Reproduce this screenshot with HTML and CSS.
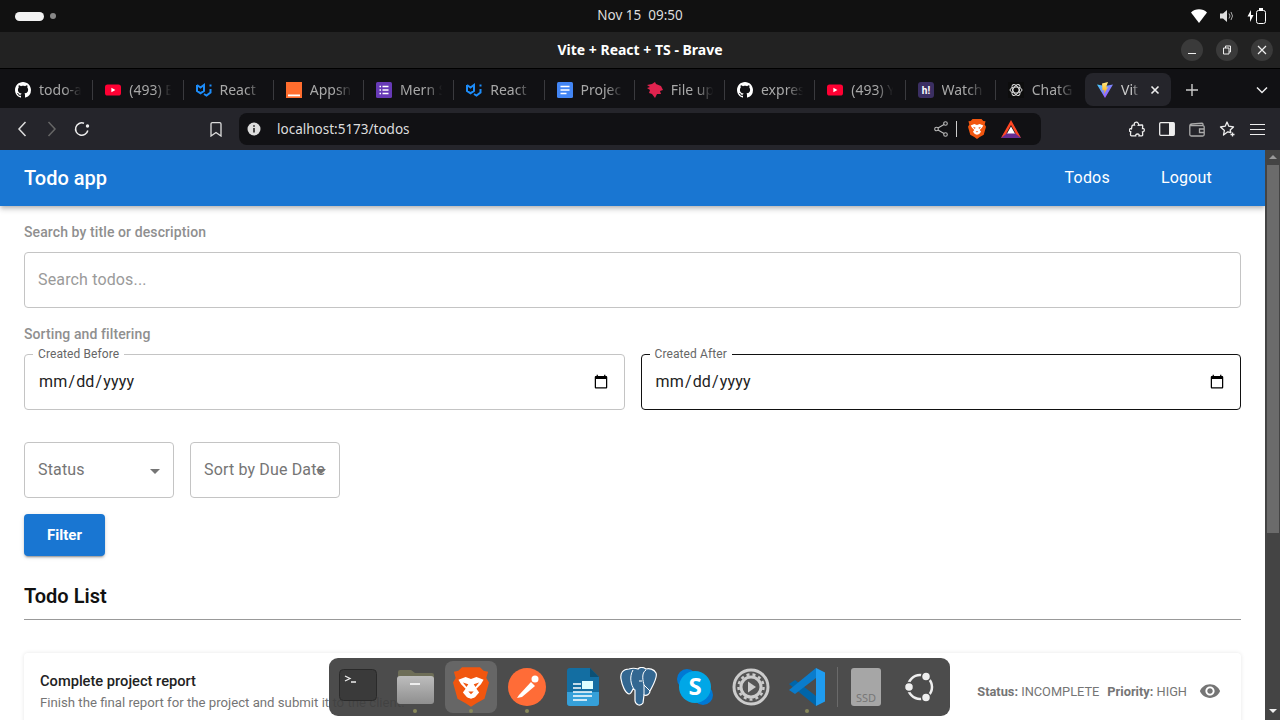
FILE: index.html
```html
<!DOCTYPE html>
<html lang="en">
  <head>
    <meta charset="UTF-8" />
    <title>Vite + React + TS - Brave</title>
    <link rel="stylesheet" href="styles.css">
  </head>
  <body>
    <svg class="defs" width="0" height="0">
      <symbol id="i-github" viewBox="0 0 16 16"><path fill="#fff" d="M8 0C3.58 0 0 3.58 0 8c0 3.54 2.29 6.53 5.47 7.59.4.07.55-.17.55-.38 0-.19-.01-.82-.01-1.49-2.01.37-2.53-.49-2.69-.94-.09-.23-.48-.94-.82-1.13-.28-.15-.68-.52-.01-.53.63-.01 1.08.58 1.23.82.72 1.21 1.87.87 2.33.66.07-.52.28-.87.51-1.07-1.78-.2-3.64-.89-3.64-3.95 0-.87.31-1.59.82-2.15-.08-.2-.36-1.02.08-2.12 0 0 .67-.21 2.2.82.64-.18 1.32-.27 2-.27.68 0 1.36.09 2 .27 1.53-1.04 2.2-.82 2.2-.82.44 1.1.16 1.92.08 2.12.51.56.82 1.27.82 2.15 0 3.07-1.87 3.75-3.65 3.95.29.25.54.73.54 1.48 0 1.07-.01 1.93-.01 2.2 0 .21.15.46.55.38A8.013 8.013 0 0016 8c0-4.42-3.58-8-8-8z"/></symbol>
      <symbol id="i-youtube" viewBox="0 0 16 16"><rect y="2.500" width="16" height="11" rx="2.600" fill="#ff0033"/><path fill="#fff" d="M6.400 5.700 10.400 8l-4 2.300z"/></symbol>
      <symbol id="i-mui" viewBox="0 0 16 16"><path fill="none" stroke="#1d8cf8" stroke-width="2" d="M1 3v6l3.500 2.200L8 9V3L4.500 5.500 1 3M14.500 2.500v2M14.500 7v3.500l-4 3-2.500-1.500"/></symbol>
      <symbol id="i-brave" viewBox="0 0 40 44">
        <path fill="#f1560f" d="M20 0H10L6 4 1 5l2 7-3 5 5 18 9 5 6 4 6-4 9-5 5-18-3-5 2-7-5-1-4-4z"/>
        <path fill="#fff" d="M6 14l8-3 6 2 6-2 8 3-3 5-5 5 3 4-5 6-4 2-4-2-5-6 3-4-5-5z"/>
        <path fill="#f1560f" d="M11 17l6 2-2 3zM29 17l-6 2 2 3zM17 27h6l-3 3zM14 33l6 2 6-2-6 5z"/>
      </symbol>
      <symbol id="i-bat" viewBox="0 0 20 18">
        <path fill="#662d91" d="M0 18h20l-3-5H3z"/>
        <path fill="#ff4724" d="M10 0 0 18l5-4 5-9 5 9 5 4z"/>
        <path fill="#fff" d="M10 6.500 6 13.500h8z"/>
      </symbol>
      <linearGradient id="folder-grad" x1="0" y1="0" x2="0" y2="1"><stop offset="0" stop-color="#bdbdbd"/><stop offset="1" stop-color="#8f8f8f"/></linearGradient>
    </svg>

    <div class="sysbar">
      <div class="workspaces"><span class="ws-pill"></span><span class="ws-dot"></span></div>
      <div class="clock">Nov 15&nbsp;&nbsp;09:50</div>
      <div class="sys-icons">
        <svg width="16" height="14" viewBox="0 0 16 14"><path fill="#fff" d="M0 3.500C4-.8 12-.8 16 3.500L8 14z"/></svg>
        <svg width="16" height="14" viewBox="0 0 16 14"><path fill="#ddd" d="M1 4.500h3L8 1v12L4 9.500H1z"/><path fill="none" stroke="#aaa" d="M10 4.500q2 2.500 0 5M12 3q3 4 0 8"/></svg>
        <svg width="20" height="16" viewBox="0 0 20 16"><path fill="#fff" d="M4 2 .5 8.500H3V14l3.500-7H4z"/><rect x="9.500" y="2.500" width="9" height="13" rx="2" fill="none" stroke="#fff"/><rect x="12" y="0" width="4" height="2" fill="#fff"/></svg>
      </div>
    </div>

    <div class="titlebar">
      <div class="win-title">Vite + React + TS - Brave</div>
      <div class="win-btns">
        <span class="win-btn"><svg width="10" height="10" viewBox="0 0 10 10"><path stroke="#eee" d="M1 8.500h8"/></svg></span>
        <span class="win-btn"><svg width="10" height="10" viewBox="0 0 10 10"><path fill="none" stroke="#eee" d="M1.500 3h5.500v6h-5.500zM3.500 3v-2h5v6h-1.500"/></svg></span>
        <span class="win-btn"><svg width="10" height="10" viewBox="0 0 10 10"><path stroke="#eee" stroke-width="1.200" d="M1 1l8 8M9 1l-8 8"/></svg></span>
      </div>
    </div>

    <div class="tabbar">
      <div class="tab"><svg class="favicon"><use href="#i-github"/></svg><span class="tab-title">todo-a</span></div>
      <div class="tab"><svg class="favicon"><use href="#i-youtube"/></svg><span class="tab-title">(493) E</span></div>
      <div class="tab"><svg class="favicon"><use href="#i-mui"/></svg><span class="tab-title">React</span></div>
      <div class="tab"><svg class="favicon" viewBox="0 0 16 16"><rect width="16" height="16" fill="#ff6d2e"/><rect x="2" y="12.500" width="12" height="1.800" fill="#fff"/></svg><span class="tab-title">Appsn</span></div>
      <div class="tab"><svg class="favicon" viewBox="0 0 16 16"><rect width="16" height="16" rx="1.500" fill="#673ab7"/><path stroke="#fff" stroke-width="1.500" d="M3.500 4.500h1.500M6.500 4.500h6M3.500 8h1.500M6.500 8h6M3.500 11.500h1.500M6.500 11.500h6"/></svg><span class="tab-title">Mern S</span></div>
      <div class="tab"><svg class="favicon"><use href="#i-mui"/></svg><span class="tab-title">React</span></div>
      <div class="tab"><svg class="favicon" viewBox="0 0 16 16"><rect width="16" height="16" rx="1.500" fill="#4285f4"/><path stroke="#fff" stroke-width="1.500" d="M3.500 4.500h9M3.500 8h9M3.500 11.500h6"/></svg><span class="tab-title">Projec</span></div>
      <div class="tab"><svg class="favicon" viewBox="0 0 16 16"><path fill="#e0234e" d="M0 3l5-1 3-2 1 2 5 2 2 4-3 1 1 3-4 0-2 4-3-4-3-1 1-3-3-2 3-1z"/></svg><span class="tab-title">File up</span></div>
      <div class="tab"><svg class="favicon"><use href="#i-github"/></svg><span class="tab-title">expres</span></div>
      <div class="tab"><svg class="favicon"><use href="#i-youtube"/></svg><span class="tab-title">(493) Y</span></div>
      <div class="tab"><svg class="favicon" viewBox="0 0 16 16"><rect width="16" height="16" rx="3" fill="#3b2f63"/><text x="8" y="12" text-anchor="middle" class="hn-text">h!</text></svg><span class="tab-title">Watch</span></div>
      <div class="tab tab-last"><svg class="favicon" viewBox="0 0 16 16"><rect width="16" height="16" fill="#0d0d0d"/><g fill="none" stroke="#ddd" stroke-width="1"><ellipse cx="8" cy="8" rx="6" ry="3"/><ellipse cx="8" cy="8" rx="6" ry="3" transform="rotate(60 8 8)"/><ellipse cx="8" cy="8" rx="6" ry="3" transform="rotate(120 8 8)"/></g></svg><span class="tab-title">ChatG</span></div>
      <div class="tab tab-active">
        <svg class="favicon" viewBox="0 0 16 16">
          <defs>
            <linearGradient id="vite-a" x1="0" y1="0" x2="1" y2="1"><stop offset="0" stop-color="#41d1ff"/><stop offset="1" stop-color="#bd34fe"/></linearGradient>
            <linearGradient id="vite-b" x1="0" y1="0" x2="0" y2="1"><stop offset="0" stop-color="#ffea83"/><stop offset="1" stop-color="#ffa800"/></linearGradient>
          </defs>
          <path fill="url(#vite-a)" d="M0 2.500 8 4l8-1.500L8 16z"/>
          <path fill="url(#vite-b)" d="M11 0 5 1.500l.5 7 2-.5-.5 4 4-7-2 .5z"/>
        </svg>
        <span class="tab-title">Vit</span>
        <svg class="tab-close" width="10" height="10" viewBox="0 0 10 10"><path stroke="#eee" stroke-width="1.600" d="M1.500 1.500l7 7M8.500 1.500l-7 7"/></svg>
      </div>
      <div class="tab-plus"><svg width="12" height="12" viewBox="0 0 12 12"><path stroke="#ccc" stroke-width="1.400" d="M6 0v12M0 6h12"/></svg></div>
      <div class="tab-more"><svg width="12" height="8" viewBox="0 0 12 8"><path fill="none" stroke="#eee" stroke-width="1.500" d="M1 1.500 6 6.500l5-5"/></svg></div>
    </div>

    <div class="toolbar">
      <span class="tb-btn"><svg width="10" height="16" viewBox="0 0 10 16"><path fill="none" stroke="#ddd" stroke-width="1.500" d="M8.500 1 2 8l6.500 7"/></svg></span>
      <span class="tb-btn"><svg width="10" height="16" viewBox="0 0 10 16"><path fill="none" stroke="#666" stroke-width="1.500" d="M1.500 1 8 8l-6.500 7"/></svg></span>
      <span class="tb-btn"><svg width="16" height="16" viewBox="0 0 16 16"><path fill="none" stroke="#eee" stroke-width="1.500" d="M13.800 9.500A6.200 6.200 0 1 1 10 2.300"/><circle cx="13.500" cy="5" r="1.700" fill="#eee"/></svg></span>
      <span class="tb-btn tb-bookmark"><svg width="12" height="15" viewBox="0 0 12 15"><path fill="none" stroke="#ddd" stroke-width="1.300" d="M1 2a1.300 1.300 0 0 1 1.300-1.300h7.400A1.300 1.300 0 0 1 11 2v12L6 10.500 1 14z"/></svg></span>
      <div class="omnibox">
        <svg width="14" height="14" viewBox="0 0 14 14"><circle cx="7" cy="7" r="6.500" fill="#ddd"/><path stroke="#222" stroke-width="1.600" d="M7 6v4.500M7 3.200v1.600"/></svg>
        <span class="url">localhost:5173/todos</span>
        <div class="omni-right">
          <svg width="14" height="16" viewBox="0 0 14 16"><g fill="none" stroke="#bbb" stroke-width="1.100"><circle cx="2.500" cy="8" r="1.800"/><circle cx="11.500" cy="2.500" r="1.800"/><circle cx="11.500" cy="13.500" r="1.800"/><path d="M4 7l6-3.500M4 9l6 3.500"/></g></svg>
          <span class="omni-sep"></span>
          <svg class="omni-brave"><use href="#i-brave"/></svg>
          <svg class="omni-bat"><use href="#i-bat"/></svg>
        </div>
      </div>
      <span class="tb-btn tb-ext"><svg width="16" height="16" viewBox="0 0 16 16"><path fill="none" stroke="#eee" stroke-width="1.300" d="M6 1.500q2-1 3 .5t.5 2.200l3.500-.2q.7 0 .7.8l-.2 2.700q1.800-.4 1.800 1.500t-1.800 1.800l.2 3.200q0 .8-.8.800h-2.900q.5-1.800-1.500-1.800t-1.800 1.800H2.500q-1 0-1-1l.2-3.200Q0 10.500.500 8.800t2-1L3 5q.200-.8 1-.8h1.500Q4.800 2.500 6 1.500z"/></svg></span>
      <span class="tb-btn"><svg width="16" height="14" viewBox="0 0 16 14"><rect x=".700" y=".700" width="14.600" height="12.600" rx="1" fill="none" stroke="#eee" stroke-width="1.300"/><rect x="10" y="1" width="5" height="12" fill="#eee"/></svg></span>
      <span class="tb-btn"><svg width="16" height="15" viewBox="0 0 16 15"><path fill="none" stroke="#aaa" stroke-width="1.300" d="M14 3.500V2.200q0-1-1-1L3 1.800Q.800 2 .8 4v8.500q0 1.500 1.500 1.500h11.400q1.500 0 1.500-1.500V5q0-1.500-1.500-1.500H1.500M15 7h-4.500v3.500H15"/></svg></span>
      <span class="tb-btn"><svg width="17" height="17" viewBox="0 0 17 17"><path fill="none" stroke="#eee" stroke-width="1.300" stroke-linejoin="round" d="M8 1l1.800 4.200 4.700.8-3.300 3 .6 2.500-3-.7L4.500 14l.9-4.600L1.500 6l4.700-.8z"/><path stroke="#eee" stroke-width="1.300" d="M13.500 11.500v4M11.500 13.500h4"/></svg></span>
      <span class="tb-btn"><svg width="15" height="13" viewBox="0 0 15 13"><path stroke="#eee" d="M0 1.500h15M0 6.500h15M0 11.500h15"/></svg></span>
    </div>

    <div class="viewport">
      <div class="page">
        <nav class="appbar">
          <div class="brand">Todo app</div>
          <div class="nav-links">
            <a class="nav-link">Todos</a>
            <a class="nav-link">Logout</a>
          </div>
        </nav>

        <main class="content">
          <p class="section-label">Search by title or description</p>
          <div class="box box-search">Search todos...</div>

          <p class="section-label">Sorting and filtering</p>
          <div class="date-row">
            <div class="date-field">
              <span class="float-label">Created Before</span>
              <input class="date-input" type="date" />
            </div>
            <div class="date-field date-focus">
              <span class="float-label">Created After</span>
              <input class="date-input" type="date" />
            </div>
          </div>

          <div class="select-row">
            <div class="box select">Status<span class="caret"></span></div>
            <div class="box select">Sort by Due Date<span class="caret"></span></div>
          </div>

          <button class="filter-btn">Filter</button>

          <h2 class="list-title">Todo List</h2>
          <hr class="divider" />

          <div class="todo-card">
            <div class="todo-text">
              <div class="todo-name">Complete project report</div>
              <div class="todo-desc">Finish the final report for the project and submit it to the client.</div>
            </div>
            <div class="todo-meta">
              <span><b>Status:</b> INCOMPLETE</span>
              <span><b>Priority:</b> HIGH</span>
              <svg class="eye" width="22" height="22" viewBox="0 0 24 24"><path fill="#757575" d="M12 4.500C7 4.500 2.730 7.610 1 12c1.730 4.390 6 7.500 11 7.500s9.270-3.110 11-7.500c-1.730-4.390-6-7.500-11-7.500zM12 17c-2.760 0-5-2.240-5-5s2.240-5 5-5 5 2.240 5 5-2.240 5-5 5zm0-8c-1.660 0-3 1.340-3 3s1.340 3 3 3 3-1.340 3-3-1.340-3-3-3z"/></svg>
            </div>
          </div>
        </main>
      </div>

      <div class="scrollbar">
        <span class="sb-arrow sb-up"></span>
        <span class="sb-thumb"></span>
        <span class="sb-arrow sb-down"></span>
      </div>
    </div>

    <div class="dock">
      <div class="dock-item">
        <svg width="40" height="36" viewBox="0 0 40 36"><rect x=".500" y=".500" width="37" height="31" rx="4" fill="#3a3a3a" stroke="#2a2a2a"/><path fill="none" stroke="#eee" stroke-width="1.300" d="M6 7l5 2.500L6 12M12 13h5"/></svg>
      </div>
      <div class="dock-item has-dot">
        <svg width="37" height="36" viewBox="0 0 37 36"><path fill="#6e6e58" d="M1 3q0-2 2-2h11l4 3h17q2 0 2 2v6H1z"/><rect y="7" width="37" height="28" rx="3" fill="url(#folder-grad)"/><rect x="13" y="14" width="10" height="2" fill="#eee"/></svg>
      </div>
      <div class="dock-item dock-active has-dot">
        <svg width="36" height="40"><use href="#i-brave"/></svg>
      </div>
      <div class="dock-item has-dot">
        <svg width="38" height="38" viewBox="0 0 38 38"><circle cx="19" cy="19" r="19" fill="#ff6c37"/><path fill="#fff" d="M9 30l2-3 12-13 4 4-13 11z"/><circle cx="27" cy="11" r="3.500" fill="#fff"/></svg>
      </div>
      <div class="dock-item">
        <svg width="32" height="38" viewBox="0 0 32 38"><path fill="#136ea2" d="M3 0h20l9 9v26q0 3-3 3H3q-3 0-3-3V3q0-3 3-3z"/><path fill="#36a0d9" d="M0 24h32v11q0 3-3 3H3q-3 0-3-3z"/><path fill="#0c5075" d="M23 0l9 9h-9z"/><path stroke="#fff" stroke-width="1.500" d="M6 16h8M6 20h8M6 24h19M6 28h19M6 32h14"/><rect x="15" y="13" width="11" height="8" fill="#dff"/></svg>
      </div>
      <div class="dock-item">
        <svg width="40" height="40" viewBox="0 0 40 40"><path fill="#336791" stroke="#fff" stroke-width="1.200" d="M10 2C4 2 1 6 2 12c1 6 4 14 8 15 2 0 3-3 4-5l2 1v11c1 5 6 5 8 2l1-8c3 1 6-1 6-4 3-6 8-14 6-18-2-4-7-5-10-4-3-2-6-2-8 0-3-1-6-1-9 0z"/><path fill="none" stroke="#fff" d="M14 3c-4 7-2 15 1 19M27 3c-5 3-3 11-2 15v10M31 24l-6-6M20 14h3"/></svg>
      </div>
      <div class="dock-item">
        <svg width="36" height="36" viewBox="0 0 36 36"><circle cx="10" cy="10" r="10" fill="#0078d4"/><circle cx="26" cy="26" r="10" fill="#0078d4"/><circle cx="18" cy="18" r="16" fill="#00a7e7"/><text x="18" y="26" text-anchor="middle" class="skype-text">S</text></svg>
      </div>
      <div class="dock-item">
        <svg width="38" height="38" viewBox="0 0 38 38"><circle cx="19" cy="19" r="17" fill="#555" stroke="#ccc" stroke-width="3"/><circle cx="19" cy="19" r="10" fill="none" stroke="#ccc" stroke-width="3"/><circle cx="19" cy="19" r="12.500" fill="none" stroke="#ccc" stroke-width="2.500" stroke-dasharray="3 3"/><path fill="#ccc" d="M16 13.500l8 5.500-8 5.500z"/></svg>
      </div>
      <div class="dock-item has-dot">
        <svg width="36" height="38" viewBox="0 0 36 38"><path fill="#0065a9" d="M27 38V28L6 12l-6 4z"/><path fill="#0a7ccc" d="M27 0v10L6 26l-6-4z"/><path fill="#1f9cf0" d="M27 0l9 4.500v29L27 38z"/></svg>
      </div>
      <span class="dock-sep"></span>
      <div class="dock-item">
        <svg width="30" height="38" viewBox="0 0 30 38"><rect width="30" height="38" rx="3" fill="#a6a6a6"/><text x="15" y="34" text-anchor="middle" class="ssd-text">SSD</text></svg>
      </div>
      <div class="dock-item dock-last">
        <svg width="32" height="32" viewBox="0 0 32 32"><circle cx="16" cy="16" r="12" fill="none" stroke="#eee" stroke-width="2.500"/><g fill="#eee" stroke="#4c4c4c" stroke-width="1.500"><circle cx="5" cy="16" r="4.500"/><circle cx="22" cy="5.500" r="4.500"/><circle cx="22" cy="26.500" r="4.500"/></g></svg>
      </div>
    </div>
  </body>
</html>
```

FILE: styles.css
```css
* {
  box-sizing: border-box;
}
html,
body {
  margin: 0;
  padding: 0;
  height: 720px;
  overflow: hidden;
}
body {
  position: relative;
  display: flex;
  flex-direction: column;
  font-family: Roboto, Arial, sans-serif;
  background: #fff;
}
.defs {
  position: absolute;
}

/* desktop top bar */
.sysbar {
  display: flex;
  align-items: center;
  height: 32px;
  flex: none;
  position: relative;
  background: #111;
  color: #ddd;
  font-family: "Noto Sans", sans-serif;
  font-size: 13.5px;
}
.workspaces {
  display: flex;
  align-items: center;
  gap: 6px;
  padding-left: 15px;
}
.ws-pill {
  width: 29px;
  height: 9px;
  border-radius: 5px;
  background: #f2f2f2;
}
.ws-dot {
  width: 6px;
  height: 6px;
  border-radius: 50%;
  background: #888;
}
.clock {
  position: absolute;
  left: 0;
  right: 0;
  top: 6px;
  text-align: center;
  line-height: 18px;
}
.sys-icons {
  display: flex;
  align-items: center;
  gap: 12px;
  margin-left: auto;
  padding-right: 13px;
}

/* window title */
.titlebar {
  display: flex;
  align-items: center;
  flex: none;
  height: 37px;
  position: relative;
  background: #222;
  border-bottom: 1px solid #000;
}
.win-title {
  position: absolute;
  left: 0;
  right: 0;
  top: 9px;
  text-align: center;
  color: #fff;
  font-family: "Noto Sans", sans-serif;
  font-size: 14px;
  font-weight: 700;
  line-height: 18px;
}
.win-btns {
  display: flex;
  gap: 13px;
  margin-left: auto;
  padding-right: 7px;
}
.win-btn {
  display: flex;
  align-items: center;
  justify-content: center;
  width: 22px;
  height: 22px;
  border-radius: 50%;
  background: #3a3a3a;
}

/* tabs */
.tabbar {
  display: flex;
  align-items: center;
  flex: none;
  height: 39px;
  padding: 2px 0 0 3px;
  background: #111114;
}
.tab {
  display: flex;
  align-items: center;
  gap: 8px;
  flex: none;
  width: 90.25px;
  height: 20px;
  padding-left: 12px;
  border-right: 1px solid #3a3a3e;
}
.tab-last {
  border-right: none;
}
.favicon {
  width: 16px;
  height: 16px;
  flex: none;
}
.tab-title {
  width: 46px;
  white-space: nowrap;
  color: #a8a8a8;
  font-family: "Noto Sans", sans-serif;
  font-size: 14px;
  -webkit-mask-image: linear-gradient(to right, #000 55%, transparent 92%);
  mask-image: linear-gradient(to right, #000 55%, transparent 92%);
}
.tab-active {
  width: 86px;
  height: 33px;
  margin-left: -1px;
  border: none;
  border-radius: 8px;
  background: #25252b;
}
.tab-active .tab-title {
  width: 20px;
  color: #ccc;
}
.tab-close {
  flex: none;
  margin-left: 1px;
}
.tab-plus {
  display: flex;
  margin-left: 15px;
}
.tab-more {
  display: flex;
  margin-left: auto;
  padding-right: 12px;
}
.hn-text {
  fill: #fff;
  font-family: Roboto, sans-serif;
  font-size: 10px;
  font-weight: 700;
}

/* browser toolbar */
.toolbar {
  display: flex;
  align-items: center;
  flex: none;
  height: 42px;
  padding-left: 7px;
  background: #25252b;
}
.tb-btn {
  display: flex;
  align-items: center;
  justify-content: center;
  width: 30px;
  height: 30px;
  flex: none;
}
.tb-bookmark {
  margin-left: 104px;
  margin-right: 8px;
}
.tb-ext {
  margin-left: 81px;
}
.omnibox {
  display: flex;
  align-items: center;
  gap: 16px;
  width: 802px;
  height: 32px;
  padding: 0 20px 0 8px;
  border-radius: 8px;
  background: #111114;
}
.url {
  color: #ddd;
  font-family: "Noto Sans", sans-serif;
  font-size: 13.5px;
}
.omni-right {
  display: flex;
  align-items: center;
  margin-left: auto;
}
.omni-sep {
  width: 1px;
  height: 16px;
  margin: 0 11px 0 8px;
  background: #ccc;
}
.omni-brave {
  width: 18px;
  height: 20px;
}
.omni-bat {
  width: 20px;
  height: 18px;
  margin-left: 15px;
}

/* page area */
.viewport {
  display: flex;
  flex: 1;
  min-height: 0;
}
.page {
  flex: 1;
  min-width: 0;
  overflow: hidden;
}
.appbar {
  display: flex;
  align-items: center;
  height: 56px;
  padding: 0 53px 0 24px;
  background: #1976d2;
  color: #fff;
  box-shadow: 0 2px 4px -1px rgba(0, 0, 0, 0.2), 0 4px 5px rgba(0, 0, 0, 0.14);
  position: relative;
}
.brand {
  font-size: 20px;
  font-weight: 500;
}
.nav-links {
  display: flex;
  gap: 51px;
  margin-left: auto;
  padding-bottom: 2px;
  font-size: 16px;
  letter-spacing: 0.2px;
}
.content {
  padding: 0 24px;
}
.section-label {
  margin: 0;
  padding-top: 18px;
  height: 46px;
  color: #8f8f8f;
  font-size: 14px;
  font-weight: 500;
  letter-spacing: 0.1px;
  line-height: 16px;
}
.box {
  display: flex;
  align-items: center;
  height: 56px;
  padding: 0 13px 2px;
  border: 1px solid #c4c4c4;
  border-radius: 4px;
  color: #757575;
  font-size: 16px;
  letter-spacing: 0.15px;
}
.box-search {
  color: #9a9a9a;
}
.date-row {
  display: flex;
  gap: 16px;
}
.date-field {
  position: relative;
  flex: 1;
}
.float-label {
  position: absolute;
  left: 9px;
  top: -7px;
  padding: 0 5px;
  background: #fff;
  color: #666;
  font-size: 12px;
  letter-spacing: 0.1px;
  line-height: 14px;
}
.date-input {
  display: block;
  width: 100%;
  height: 56px;
  padding: 0 13px;
  border: 1px solid #c4c4c4;
  border-radius: 4px;
  background: #fff;
  color: #222;
  font-family: Roboto, sans-serif;
  font-size: 16px;
  letter-spacing: 0.15px;
  outline: none;
}
.date-input::-webkit-datetime-edit {
  padding-bottom: 2px;
}
.date-focus .date-input {
  border-color: #111;
}
.select-row {
  display: flex;
  gap: 16px;
  margin-top: 32px;
}
.select {
  position: relative;
  width: 150px;
  white-space: nowrap;
}
.caret {
  position: absolute;
  right: 13px;
  top: 26px;
  border-left: 5px solid transparent;
  border-right: 5px solid transparent;
  border-top: 5px solid #757575;
}
.filter-btn {
  display: block;
  width: 81px;
  height: 42px;
  margin-top: 16px;
  border: none;
  border-radius: 4px;
  background: #1976d2;
  color: #fff;
  font-family: Roboto, sans-serif;
  font-size: 15px;
  font-weight: 700;
  box-shadow: 0 3px 1px -2px rgba(0, 0, 0, 0.2), 0 2px 2px rgba(0, 0, 0, 0.14), 0 1px 5px rgba(0, 0, 0, 0.12);
}
.list-title {
  margin: 28px 0 0;
  color: #111;
  font-size: 20px;
  font-weight: 600;
  line-height: 24px;
}
.divider {
  margin: 11px 0 0;
  border: none;
  border-top: 1px solid #999;
}
.todo-card {
  display: flex;
  justify-content: space-between;
  align-items: center;
  height: 80px;
  margin-top: 33px;
  padding: 0 20px 4px 16px;
  border-radius: 4px;
  background: #fff;
  box-shadow: 0 0 4px rgba(0, 0, 0, 0.1);
}
.todo-name {
  color: #222;
  font-size: 14.66px;
  font-weight: 500;
  line-height: 20px;
}
.todo-desc {
  margin-top: 3px;
  color: #757575;
  font-size: 13.2px;
  line-height: 18px;
}
.todo-meta {
  display: flex;
  align-items: center;
  gap: 8px;
  color: #757575;
  font-size: 12.8px;
}
.todo-meta b {
  font-weight: 700;
}
.eye {
  margin-left: 4px;
}
.scrollbar {
  display: flex;
  flex-direction: column;
  align-items: center;
  flex: none;
  width: 15px;
  background: #444;
  padding: 5px 1px 7px;
}
.sb-thumb {
  width: 12px;
  height: 368px;
  margin-top: 6px;
  background: #6b6b6b;
}
.sb-arrow {
  flex: none;
  border-left: 4px solid transparent;
  border-right: 4px solid transparent;
}
.sb-up {
  border-bottom: 4px solid #999;
}
.sb-down {
  margin-top: auto;
  border-top: 4px solid #eee;
}

/* dock floats over the page */
.dock {
  position: absolute;
  left: 329px;
  top: 658px;
  display: flex;
  align-items: center;
  width: 621px;
  height: 58px;
  padding-left: 2px;
  border-radius: 9px;
  background: rgba(62, 62, 62, 0.93);
}
.dock-item {
  position: relative;
  display: flex;
  align-items: center;
  justify-content: center;
  flex: none;
  width: 56px;
  height: 52px;
}
.dock-active::before {
  content: "";
  position: absolute;
  left: 2px;
  top: 0;
  width: 52px;
  height: 52px;
  border-radius: 8px;
  background: rgba(255, 255, 255, 0.15);
}
.dock-active svg {
  position: relative;
}
.has-dot::after {
  content: "";
  position: absolute;
  left: 26px;
  bottom: 0;
  width: 4px;
  height: 4px;
  border-radius: 50%;
  background: #88885a;
}
.dock-sep {
  flex: none;
  width: 1px;
  height: 40px;
  margin-left: 2px;
  background: #6a6a6a;
}
.dock-last {
  margin-left: -2px;
}
.skype-text {
  fill: #fff;
  font-family: "Open Sans", sans-serif;
  font-size: 24px;
  font-weight: 700;
}
.ssd-text {
  fill: #777;
  font-family: "Noto Sans", sans-serif;
  font-size: 11px;
}
```
